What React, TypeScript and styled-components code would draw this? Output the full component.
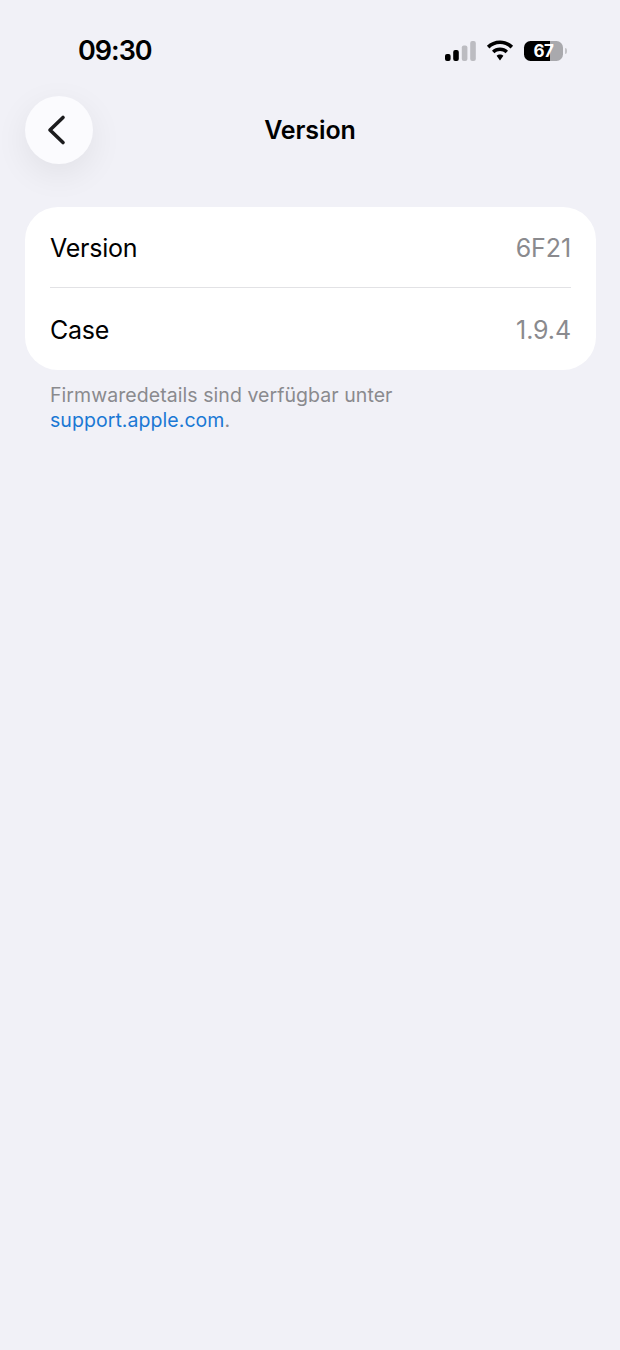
import React from 'react';
import styled, { createGlobalStyle } from 'styled-components';

const GlobalStyle = createGlobalStyle`
    html, body {
        margin: 0;
        padding: 0;
        background: #f1f1f7;
        font-family: Inter, "Noto Sans", "Liberation Sans", sans-serif;
    }
`;

const Page = styled.div`
    width: 620px;
    height: 1350px;
    overflow: hidden;
    background: #f1f1f7;
    color: #000;
`;

const StatusBar = styled.div`
    height: 96px;
    box-sizing: border-box;
    padding: 35px 57px 0 78px;
    display: flex;
    justify-content: space-between;
    align-items: flex-start;
`;

const Time = styled.div`
    font-size: 27px;
    line-height: 32px;
    font-weight: 600;
    letter-spacing: -1px;
`;

const StatusIcons = styled.div`
    display: flex;
    align-items: center;
    gap: 10px;
    padding-top: 5px;
`;

const Battery = styled.div`
    position: relative;
    width: 39px;
    height: 20px;
    border-radius: 6.5px;
    background: linear-gradient(90deg, #000 0 26px, #a9a9ad 26px 100%);
    display: flex;
    align-items: center;
    justify-content: center;
    color: #fff;
    font-size: 17px;
    font-weight: 700;
    letter-spacing: -0.5px;

    &::after {
        content: '';
        position: absolute;
        right: -4px;
        top: 7px;
        width: 2.5px;
        height: 6px;
        border-radius: 0 2px 2px 0;
        background: #c4c4c8;
    }
`;

const NavBar = styled.div`
    display: grid;
    grid-template-columns: 68px 1fr 68px;
    align-items: center;
    height: 68px;
    padding: 0 25px;
`;

const BackButton = styled.button`
    width: 68px;
    height: 68px;
    padding: 0;
    border: none;
    border-radius: 50%;
    background: #fbfbfe;
    box-shadow: 0 10px 34px rgba(0, 0, 0, 0.07);
    display: flex;
    align-items: center;
    justify-content: center;
`;

const Title = styled.h1`
    margin: 0;
    text-align: center;
    font-size: 25px;
    line-height: 30px;
    font-weight: 600;
    letter-spacing: -0.1px;
`;

const Card = styled.div`
    margin: 43px 24px 0 25px;
    background: #fff;
    border-radius: 33px;
    padding: 0 25px 1px;
`;

const Row = styled.div<{ $divider?: boolean }>`
    height: 81px;
    box-sizing: border-box;
    padding-top: 2px;
    display: flex;
    align-items: center;
    justify-content: space-between;
    border-bottom: ${(p) => (p.$divider ? '1.5px solid #e2e2e5' : 'none')};
`;

const Label = styled.span`
    font-size: 25px;
    font-weight: 400;
    letter-spacing: -0.25px;
`;

const Value = styled.span`
    font-size: 25px;
    font-weight: 400;
    letter-spacing: -0.1px;
    color: #8a8a8e;
`;

const Footnote = styled.p`
    margin: 12.5px 25px 0 50px;
    font-size: 19.5px;
    line-height: 25px;
    letter-spacing: 0.06px;
    color: #8a8a8e;
`;

const SupportLink = styled.span`
    color: #1a78d4;
`;

const App: React.FC = () => {
    return (
        <Page>
            <GlobalStyle />
            <StatusBar>
                <Time>09:30</Time>
                <StatusIcons>
                    <svg width='31' height='20' viewBox='0 0 31 20'>
                        <rect x='0' y='13' width='5.6' height='7' rx='2' fill='#000' />
                        <rect x='8.2' y='9' width='5.6' height='11' rx='2' fill='#000' />
                        <rect x='16.8' y='4.5' width='5.6' height='15.5' rx='2' fill='#bcbcc1' />
                        <rect x='25.2' y='0' width='5.6' height='20' rx='2' fill='#bcbcc1' />
                    </svg>
                    <svg width='28' height='21' viewBox='0 0 28 21'>
                        <path
                            d='M14 0.5C8.9 0.5 4.3 2.5 0.9 5.8L3.4 8.4C6.2 5.8 9.9 4.1 14 4.1s7.8 1.7 10.6 4.3l2.5-2.6C23.7 2.5 19.1 0.5 14 0.5zM14 7.5c-3.1 0-5.9 1.2-8 3.2l2.5 2.6C10 12 11.9 11.1 14 11.1s4 0.9 5.5 2.2l2.5-2.6C19.9 8.7 17.1 7.5 14 7.5zM14 14.5c-1.4 0-2.5 0.5-3.4 1.3L14 20.5l3.4-4.7C16.5 15 15.4 14.5 14 14.5z'
                            fill='#000'
                        />
                    </svg>
                    <Battery>67</Battery>
                </StatusIcons>
            </StatusBar>
            <NavBar>
                <BackButton aria-label='Zurück'>
                    <svg width='24' height='34' viewBox='0 0 24 34'>
                        <path
                            d='M16 4.5 L3 17 L16 29.5'
                            fill='none'
                            stroke='#1c1c1e'
                            strokeWidth='3.6'
                            strokeLinecap='round'
                            strokeLinejoin='round'
                        />
                    </svg>
                </BackButton>
                <Title>Version</Title>
                <span />
            </NavBar>
            <Card>
                <Row $divider>
                    <Label>Version</Label>
                    <Value>6F21</Value>
                </Row>
                <Row>
                    <Label>Case</Label>
                    <Value>1.9.4</Value>
                </Row>
            </Card>
            <Footnote>
                Firmwaredetails sind verfügbar unter
                <br />
                <SupportLink>support.apple.com</SupportLink>.
            </Footnote>
        </Page>
    );
};

export default App;
